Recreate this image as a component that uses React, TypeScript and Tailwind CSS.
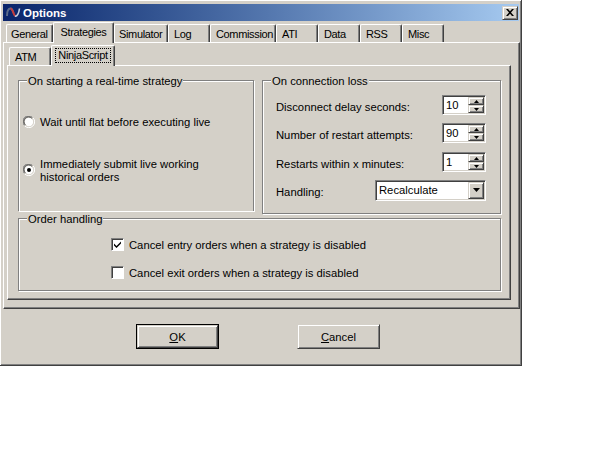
const FONT = "font-['Liberation_Sans',Arial,sans-serif]";

const mainTabs = [
  { label: "General", w: 47, pad: "pl-[4px]" },
  { label: "Strategies", w: 61, active: true },
  { label: "Simulator", w: 54, pad: "pl-[4px]" },
  { label: "Log", w: 42, pad: "pl-[5px]" },
  { label: "Commission", w: 66, pad: "pl-[5px]" },
  { label: "ATI", w: 42, pad: "pl-[5px]" },
  { label: "Data", w: 42, pad: "pl-[5px]" },
  { label: "RSS", w: 42, pad: "pl-[5px]" },
  { label: "Misc", w: 42, pad: "pl-[5px]" },
];

function Tab({ label, w, active, focus, pad }: { label: string; w: number; active?: boolean; focus?: boolean; pad?: string }) {
  return (
    <div
      style={{ width: w }}
      className={
        "relative flex shrink-0 items-center rounded-t-[2px] border-t border-l border-r border-t-white border-l-white border-r-[#404040] bg-[#d4d0c8] text-[11px] tracking-[-0.35px] shadow-[inset_-1px_0_0_#808080] " +
        (active ? "z-10 -mb-px h-[21px] justify-center pb-[2px]" : "h-[18px] justify-start pt-px ") +
        (pad ?? "")
      }
    >
      <span className={focus ? "border border-dotted border-black px-[2px] leading-[13px]" : "leading-[13px]"}>{label}</span>
    </div>
  );
}

function Group({ title, className, children }: { title: string; className: string; children?: React.ReactNode }) {
  return (
    <div className={"relative border border-[#808080] shadow-[inset_1px_1px_0_#fff,1px_1px_0_#fff] " + className}>
      <span className="absolute left-[8px] top-[-7px] bg-[#d4d0c8] px-px leading-[14px]">{title}</span>
      {children}
    </div>
  );
}

function Radio({ checked, className }: { checked?: boolean; className?: string }) {
  return (
    <svg width="12" height="12" viewBox="0 0 12 12" className={"shrink-0 " + (className ?? "")}>
      <path d="M1.5 9.5A5.3 5.3 0 0 1 9.5 1.5" fill="none" stroke="#808080" />
      <circle cx="6" cy="6" r="4.2" fill="#fff" />
      <path d="M1.7 9.9A5.4 5.4 0 0 0 10 1.8" fill="none" stroke="#fff" />
      <path d="M2.2 8.8A4.2 4.2 0 0 1 8.8 2.2" fill="none" stroke="#404040" />
      {checked && <circle cx="6" cy="6" r="2" fill="#000" />}
    </svg>
  );
}

function Check({ checked }: { checked?: boolean }) {
  return (
    <div className="box-border flex h-[13px] w-[13px] shrink-0 items-center justify-center border border-t-[#808080] border-l-[#808080] border-r-white border-b-white bg-white shadow-[inset_1px_1px_0_#404040]">
      {checked && (
        <svg width="9" height="9" viewBox="0 0 9 9">
          <path d="M1 3.5 L3.5 6 L8 1.5 V3.5 L3.5 8 L1 5.5 Z" fill="#000" />
        </svg>
      )}
    </div>
  );
}

function Arrow({ down, size = 5 }: { down?: boolean; size?: number }) {
  const h = Math.ceil(size / 2);
  return (
    <svg width={size} height={h} viewBox={`0 0 ${size} ${h}`}>
      <path d={down ? `M0 0H${size}L${size / 2} ${h}Z` : `M0 ${h}H${size}L${size / 2} 0Z`} fill="#000" />
    </svg>
  );
}

const raised = "border border-t-[#d4d0c8] border-l-[#d4d0c8] border-r-[#404040] border-b-[#404040] bg-[#d4d0c8] shadow-[inset_1px_1px_0_#fff,inset_-1px_-1px_0_#808080]";
const sunken = "border border-t-[#808080] border-l-[#808080] border-r-white border-b-white bg-white shadow-[inset_1px_1px_0_#404040,inset_-1px_-1px_0_#d4d0c8]";

function Spin({ value }: { value: string }) {
  return (
    <div className={"flex h-[20px] w-[44px] items-center " + sunken}>
      <span className="flex-1 pl-[3px] leading-[14px]">{value}</span>
      <div className="mr-px flex h-[16px] w-[16px] flex-col">
        <div className={"flex h-[8px] items-center justify-center " + raised}><Arrow /></div>
        <div className={"flex h-[8px] items-center justify-center " + raised}><Arrow down /></div>
      </div>
    </div>
  );
}

function Row({ label, children, className }: { label: string; children: React.ReactNode; className?: string }) {
  return (
    <div className={"flex h-[20px] items-center justify-between " + (className ?? "")}>
      <span className="pt-[4px] leading-[14px]">{label}</span>
      {children}
    </div>
  );
}

export default function App() {
  return (
    <div className={"min-h-[460px] w-[614px] bg-white text-[11.25px] text-black " + FONT}>
      <div className="box-border h-[366px] w-[522px] border-r border-b border-[#404040] bg-[#d4d0c8] pt-[4px] pl-[3px] shadow-[inset_1px_1px_0_#fff,inset_-1px_-1px_0_#808080]">
        <div className="flex h-[17px] w-[516px] items-center bg-gradient-to-r from-[#0a246a] to-[#a6caf0] pl-[3px] pr-[1px]">
          <svg width="15" height="11" viewBox="0 0 15 11" className="shrink-0">
            <path d="M1 9C1 3 3 1.5 4.5 1.5S7 4 7.5 6" fill="none" stroke="#5a6a8a" strokeWidth="2" />
            <path d="M4.5 1.5C6.5 1.5 7.5 7 9 9" fill="none" stroke="#c43c3c" strokeWidth="2" />
            <path d="M9 9C11 10 13 6 13.5 1.5" fill="none" stroke="#c8d0e0" strokeWidth="1.6" />
          </svg>
          <span className="ml-[2px] flex-1 text-[11.5px] font-bold leading-[14px] text-white">Options</span>
          <div className={"flex h-[14px] w-[16px] items-center justify-center " + raised}>
            <svg width="8" height="7" viewBox="0 0 8 7">
              <path d="M0 0H2L4 2.3 6 0H8L5 3.5 8 7H6L4 4.7 2 7H0L3 3.5Z" fill="#000" />
            </svg>
          </div>
        </div>

        <div className="flex h-[21px] items-end pl-[3px]">
          {mainTabs.map((t) => (
            <Tab key={t.label} label={t.label} w={t.w} active={t.active} pad={t.pad} />
          ))}
        </div>

        <div className="box-border h-[267px] w-[517px] border-t border-l border-r border-b border-t-white border-l-white border-r-[#404040] border-b-[#404040] pt-[2px] pl-[3px] shadow-[inset_-1px_-1px_0_#808080]">
          <div className="flex h-[20px] items-end pl-[2px]">
            <Tab label="ATM" w={42} pad="pl-[5px]" />
            <Tab label="NinjaScript" w={64} active focus />
          </div>
          <div className="box-border h-[235px] w-[504px] border border-t-white border-l-white border-r-[#404040] border-b-[#404040] pt-[14px] pl-[10px] shadow-[inset_-1px_-1px_0_#808080]">
            <div className="flex items-start gap-[8px]">
              <Group title="On starting a real-time strategy" className="h-[131px] w-[236px] border-b-0">
                <div className="flex flex-col pl-[4px] pt-[33px]">
                  <div className="flex items-center gap-[5px]">
                    <Radio />
                    <span className="leading-[16px]">Wait until flat before executing live</span>
                  </div>
                  <div className="mt-[28px] flex items-start gap-[5px]">
                    <Radio checked className="mt-[6px]" />
                    <span className="leading-[13px]">Immediately submit live working<br />historical orders</span>
                  </div>
                </div>
              </Group>
              <Group title="On connection loss" className="h-[134px] w-[239px]">
                <div className="flex flex-col gap-[8px] pl-[13px] pr-[14px] pt-[14px]">
                  <Row label="Disconnect delay seconds:"><Spin value="10" /></Row>
                  <Row label="Number of restart attempts:"><Spin value="90" /></Row>
                  <Row label="Restarts within x minutes:" className="mt-px"><Spin value="1" /></Row>
                  <Row label="Handling:">
                    <div className={"flex h-[21px] w-[111px] items-center " + sunken}>
                      <span className="flex-1 pl-[3px] leading-[14px]">Recalculate</span>
                      <div className={"mr-px flex h-[17px] w-[16px] items-center justify-center " + raised}>
                        <Arrow down size={7} />
                      </div>
                    </div>
                  </Row>
                </div>
              </Group>
            </div>
            <Group title="Order handling" className="mt-[4px] h-[73px] w-[483px]">
              <div className="flex flex-col gap-[15px] pl-[92px] pt-[19px]">
                <div className="flex h-[13px] items-center gap-[5px]">
                  <Check checked />
                  <span className="leading-[14px]">Cancel entry orders when a strategy is disabled</span>
                </div>
                <div className="flex h-[13px] items-center gap-[5px]">
                  <Check />
                  <span className="leading-[14px]">Cancel exit orders when a strategy is disabled</span>
                </div>
              </div>
            </Group>
          </div>
        </div>

        <div className="flex pl-[133px] pt-[15px]">
          <div className="box-border flex h-[25px] w-[83px] items-center justify-center border border-black p-0">
            <div className={"box-border flex h-full w-full items-center justify-center " + raised}>
              <span className="leading-[14px]"><span className="underline">O</span>K</span>
            </div>
          </div>
          <div className={"ml-[78px] box-border flex h-[25px] w-[83px] items-center justify-center " + raised}>
            <span className="leading-[14px]"><span className="underline">C</span>ancel</span>
          </div>
        </div>
      </div>
    </div>
  );
}
